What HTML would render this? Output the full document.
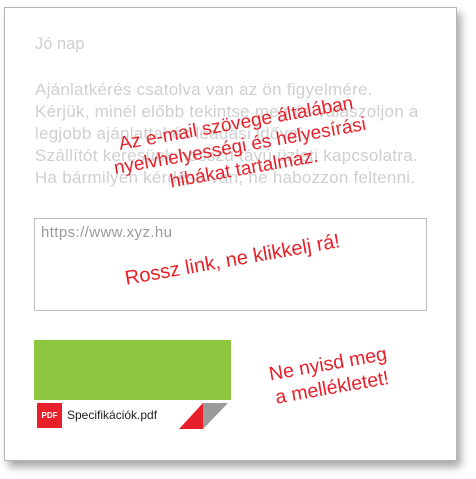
<!DOCTYPE html>
<html><head><meta charset="utf-8"><style>
html,body{margin:0;padding:0;width:476px;height:479px;background:#fff;overflow:hidden;font-family:"Liberation Sans",sans-serif}
.card{position:absolute;left:4px;top:7px;width:451px;height:452px;border:1px solid #b5b5b5;background:#fff;box-shadow:4px 6px 8px rgba(0,0,0,0.35)}
.g{position:absolute;color:#cfcfcf;white-space:nowrap}
.red{position:absolute;color:#e8202a;white-space:nowrap;text-align:center;transform:rotate(-10deg);transform-origin:center}
</style></head><body>
<div class="card"></div>
<div class="g" style="left:35px;top:35px;font-size:16.5px">Jó nap</div>
<div class="g" style="left:35px;top:79px;font-size:17px;letter-spacing:0.25px;line-height:22px">Ajánlatkérés csatolva van az ön figyelmére.<br>Kérjük, minél előbb tekintse meg és válaszoljon a<br>legjobb ajánlattal és leadási idővel.<br>Szállítót keresünk hosszú távú üzleti kapcsolatra.<br>Ha bármilyen kérdése van, ne habozzon feltenni.</div>
<div style="position:absolute;left:34px;top:218px;width:391px;height:91px;border:1px solid #bdbdbd"></div>
<div style="position:absolute;left:41px;top:224px;font-size:15px;letter-spacing:0.4px;color:#9a9a9a">https://www.xyz.hu</div>
<div class="red" style="left:80px;top:112px;width:320px;font-size:19px;line-height:23px">Az e-mail szövege általában<br>nyelvhelyességi és helyesírási<br>hibákat tartalmaz.</div>
<div class="red" style="left:100px;top:249px;width:265px;font-size:20px">Rossz link, ne klikkelj rá!</div>
<div style="position:absolute;left:34px;top:340px;width:197px;height:60px;background:#8dc63f"></div>
<div style="position:absolute;left:37px;top:403px;width:25px;height:25px;background:#e8202a;color:#fff;font-size:8px;font-weight:bold;line-height:25px;text-align:center">PDF</div>
<div style="position:absolute;left:67px;top:408px;font-size:12px;color:#222">Specifikációk.pdf</div>
<svg style="position:absolute;left:178px;top:402px" width="52" height="28"><polygon points="25,1 25,27 1,27" fill="#e8202a"/><polygon points="25,1 50,1 25,27" fill="#9b9b9b"/></svg>
<div class="red" style="left:245px;top:352px;width:170px;font-size:19.5px;line-height:24px">Ne nyisd meg<br>a mellékletet!</div>
</body></html>
